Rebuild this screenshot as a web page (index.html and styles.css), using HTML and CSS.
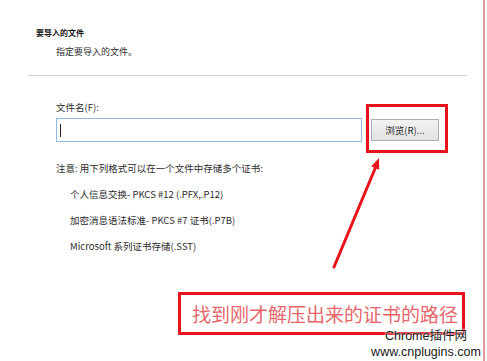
FILE: index.html
```html
<!DOCTYPE html>
<html lang="zh-CN">
<head>
    <meta charset="UTF-8">
    <meta name="viewport" content="width=device-width, initial-scale=1.0">
    <title>证书导入向导</title>
    <link rel="stylesheet" href="styles.css">
</head>
<body>
    <div class="frame">
        <h1 class="step-title">要导入的文件</h1>
        <p class="step-desc">指定要导入的文件。</p>
        <div class="divider"></div>

        <div class="file-field">
            <label class="field-label" for="fileName">文件名(F):</label>
            <div class="field-row">
                <div class="file-input" id="fileName"><span class="caret"></span></div>
                <div class="browse-wrap">
                    <button class="browse-button">浏览(R)...</button>
                    <!-- red annotation box round the button -->
                    <span class="mark-box"></span>
                </div>
            </div>
        </div>

        <p class="note">注意: 用下列格式可以在一个文件中存储多个证书:</p>
        <ul class="format-list">
            <li>个人信息交换- PKCS #12 (.PFX,.P12)</li>
            <li>加密消息语法标准- PKCS #7 证书(.P7B)</li>
            <li>Microsoft 系列证书存储(.SST)</li>
        </ul>

        <!-- annotations drawn over the screenshot -->
        <svg class="arrow" width="487" height="361" viewBox="0 0 487 361">
            <line x1="334" y1="267" x2="375.5" y2="167.5" stroke="#e8141c" stroke-width="3" stroke-linecap="round"/>
            <polygon points="379,158 379.2,169.8 371.2,166.6" fill="#e8141c"/>
        </svg>
        <div class="callout">找到刚才解压出来的证书的路径</div>
        <div class="watermark">
            <div>Chrome插件网</div>
            <div>www.cnplugins.com</div>
        </div>
    </div>
</body>
</html>
```

FILE: styles.css
```css
body {
    margin: 0;
    padding: 0;
    background-color: #ffffff;
    font-family: "Noto Sans CJK SC", "Noto Sans", sans-serif;
    color: #2b2b2b;
}
.frame {
    position: relative;
    width: 483px;
    height: 361px;
    border-right: 2px solid #dc9c9c;
    overflow: hidden;
}
.step-title {
    margin: 27px 0 0 36px;
    font-size: 8px;
    line-height: 12px;
    font-weight: bold;
    color: #111111;
}
.step-desc {
    margin: 6px 0 0 56px;
    font-size: 9px;
    line-height: 14px;
}
.divider {
    margin: 16px 16px 0 27px;
    height: 1px;
    background-color: #d4d4d4;
}
.file-field {
    margin: 24px 0 0 56px;
}
.field-label {
    display: block;
    font-size: 9.5px;
    line-height: 14px;
}
.field-row {
    display: flex;
    align-items: center;
    gap: 9px;
    margin-top: 4px;
}
.file-input {
    box-sizing: border-box;
    width: 306px;
    height: 24px;
    border: 1px solid #8fbbe6;
    display: flex;
    align-items: center;
    padding-left: 3px;
}
.caret {
    width: 1px;
    height: 13px;
    background-color: #222222;
}
.browse-wrap {
    position: relative;
}
.browse-button {
    display: block;
    box-sizing: border-box;
    width: 68px;
    height: 22px;
    padding: 0;
    border: 1px solid #adadad;
    background: linear-gradient(#f2f2f2, #e3e3e3);
    font-family: inherit;
    font-size: 9.5px;
    color: #2b2b2b;
}
.mark-box {
    position: absolute;
    top: -15px;
    left: -5px;
    right: -9px;
    bottom: -12px;
    border: 3px solid #e8141c;
}
.note {
    margin: 19px 0 0 56px;
    font-size: 9.5px;
    line-height: 14px;
}
.format-list {
    list-style: none;
    margin: 0;
    padding: 0 0 0 70px;
    font-size: 9.5px;
    line-height: 14px;
}
.format-list li {
    margin-top: 12px;
}
.arrow {
    position: absolute;
    top: 0;
    left: 0;
}
.callout {
    position: absolute;
    top: 292px;
    left: 178px;
    box-sizing: border-box;
    width: 287px;
    height: 43px;
    border: 3px solid #e8141c;
    padding-left: 11px;
    font-size: 19px;
    line-height: 37px;
    color: #e6666a;
    white-space: nowrap;
}
.watermark {
    position: absolute;
    top: 329px;
    left: 366px;
    width: 120px;
    text-align: center;
    font-family: "Liberation Sans", "Noto Sans CJK SC", sans-serif;
    font-size: 12.5px;
    line-height: 15.5px;
    color: #1a1a1a;
    text-shadow: 0 0 2px #ffffff, 0 0 2px #ffffff;
}
```
